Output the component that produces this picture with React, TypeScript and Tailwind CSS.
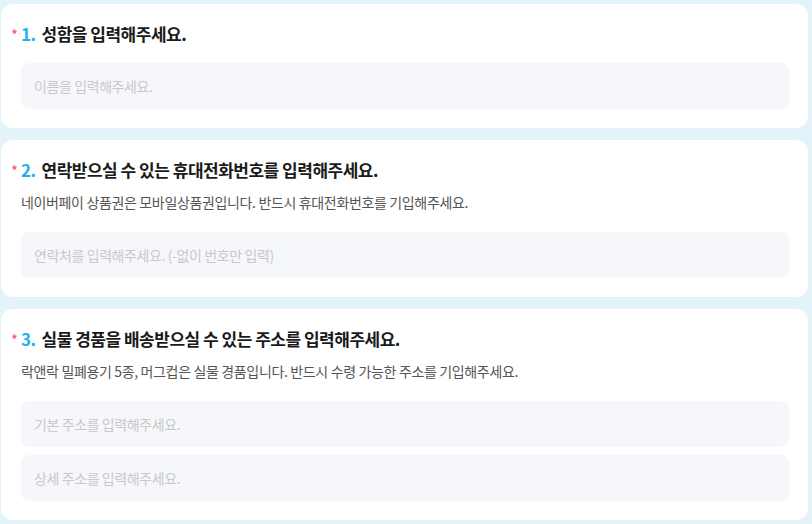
const font = { fontFamily: '"Noto Sans CJK KR", "Noto Sans", sans-serif' };

type Question = {
    no: number;
    title: string;
    desc?: string;
    placeholders: string[];
};

const questions: Question[] = [
    { no: 1, title: '성함을 입력해주세요.', placeholders: ['이름을 입력해주세요.'] },
    {
        no: 2,
        title: '연락받으실 수 있는 휴대전화번호를 입력해주세요.',
        desc: '네이버페이 상품권은 모바일상품권입니다. 반드시 휴대전화번호를 기입해주세요.',
        placeholders: ['연락처를 입력해주세요. (-없이 번호만 입력)'],
    },
    {
        no: 3,
        title: '실물 경품을 배송받으실 수 있는 주소를 입력해주세요.',
        desc: '락앤락 밀폐용기 5종, 머그컵은 실물 경품입니다. 반드시 수령 가능한 주소를 기입해주세요.',
        placeholders: ['기본 주소를 입력해주세요.', '상세 주소를 입력해주세요.'],
    },
];

const QuestionCard = ({ q }: { q: Question }) => (
    <div className="rounded-xl bg-white pt-5 pb-[19px] pl-5 pr-[19px]">
        <div className="-ml-[10px] flex items-center text-[17px] font-bold leading-5 tracking-[-0.5px] text-[#1a1a1a]">
            <span className="w-[10px] translate-y-px text-[15px] font-normal text-[#ff4b6e]">*</span>
            <span className="mr-[6px] text-[#1db3e8]">{q.no}.</span>
            <span>{q.title}</span>
        </div>
        {q.desc && (
            <p className="mt-3 text-[14px] leading-5 tracking-[-0.35px] text-[#555555]">{q.desc}</p>
        )}
        <div className={`${q.desc ? 'mt-5' : 'mt-[19px]'} flex flex-col gap-2`}>
            {q.placeholders.map((p) => (
                <input
                    key={p}
                    placeholder={p}
                    style={font}
                    className="h-[46px] w-full rounded-lg bg-[#f5f7fa] px-[13px] text-[14px] tracking-[-0.4px] text-[#333] outline-none placeholder:text-[#c9c9c9]"
                />
            ))}
        </div>
    </div>
);

const App = () => (
    <div className="min-h-screen bg-[#e2f4f9] pt-1 pr-1 pl-px pb-2" style={font}>
        <div className="flex flex-col gap-3">
            {questions.map((q) => (
                <QuestionCard key={q.no} q={q} />
            ))}
        </div>
    </div>
);

export default App;
